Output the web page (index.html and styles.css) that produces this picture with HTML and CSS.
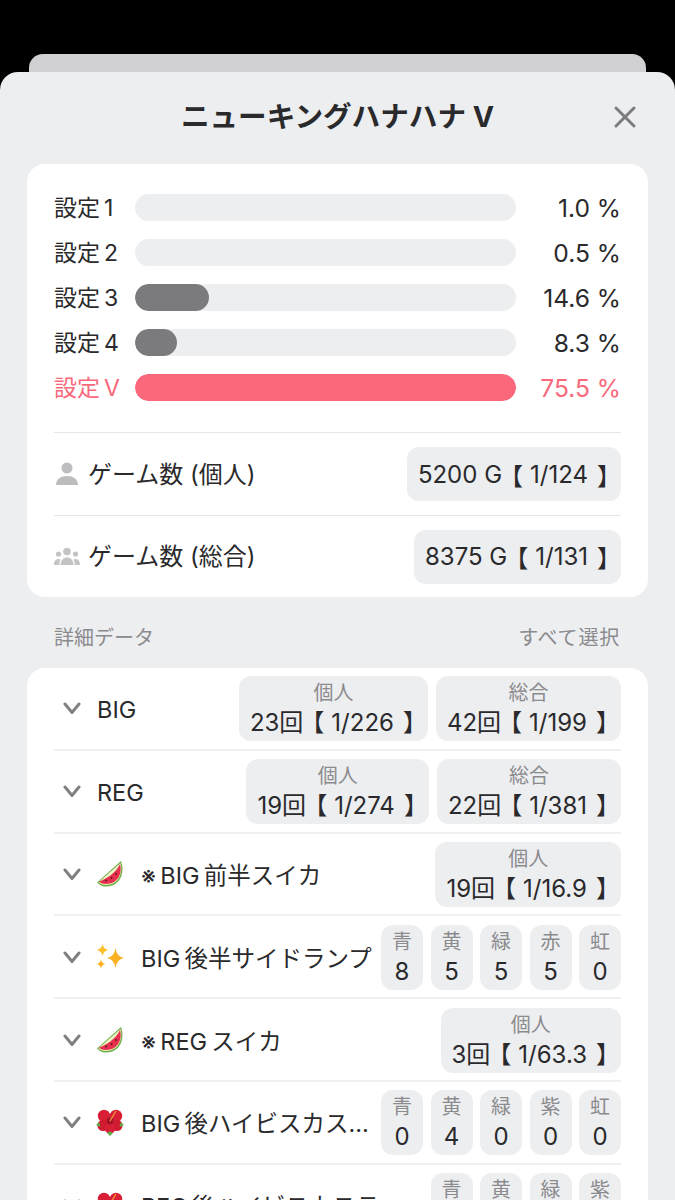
FILE: index.html

```html
<!DOCTYPE html>
<html lang="ja">
<head>
    <meta charset="UTF-8">
    <meta name="viewport" content="width=device-width, initial-scale=1.0">
    <title>ニューキングハナハナ V</title>
    <link rel="stylesheet" href="styles.css">
</head>
<body>
    <svg class="defs" width="0" height="0">
        <symbol id="chevron" viewBox="0 0 18 13"><path d="M2 2l7 8.500L16 2" fill="none" stroke="#808082" stroke-width="3" stroke-linecap="round" stroke-linejoin="round"/></symbol>
        <symbol id="melon" viewBox="0 0 28 28">
            <path d="M25 1C29 12 25 26.500 9 26.500 6 26.500 3 24.800 1 22.500z" fill="#6fae45"/>
            <path d="M24.500 3C27 13 23 25 9.300 25 6.800 25 4.500 24 2.500 22.300z" fill="#eef3c8"/>
            <path d="M24 4C26.500 13 22.500 24 9.500 24 7 24 5 23.300 3 21.500 10 19 20 13 24 4z" fill="#e8304e"/>
            <circle cx="20" cy="14" r="1" fill="#5a1a20"/><circle cx="15.500" cy="18" r="1" fill="#5a1a20"/><circle cx="10" cy="20.500" r="1" fill="#5a1a20"/>
        </symbol>
        <symbol id="sparkles" viewBox="0 0 28 28">
            <path d="M19.500 5Q20.500 13.500 28 15 20.500 16.500 19.500 25 18.500 16.500 11 15 18.500 13.500 19.500 5z" fill="#fbb124"/>
            <path d="M6.500 1Q7.300 6.200 12.500 7 7.300 7.800 6.500 13 5.700 7.800 .5 7 5.700 6.200 6.500 1z" fill="#fcc02c"/>
            <path d="M5 16.500Q5.700 20.300 9.500 21 5.700 21.700 5 25.500 4.300 21.700 .5 21 4.300 20.300 5 16.500z" fill="#fbb124"/>
        </symbol>
        <symbol id="hibiscus" viewBox="0 0 28 28">
            <circle cx="8" cy="7" r="6.200" fill="#d91f35"/><circle cx="20" cy="7" r="6.200" fill="#d91f35"/>
            <circle cx="21" cy="16.500" r="5.500" fill="#cf1b30"/><circle cx="7" cy="16.500" r="5.500" fill="#cf1b30"/><circle cx="14" cy="19" r="5.500" fill="#d91f35"/>
            <circle cx="14" cy="12" r="3.500" fill="#a5122a"/>
            <path d="M14 12l6-10" stroke="#f4a23a" stroke-width="1.200" fill="none"/>
            <path d="M0 16l3-3 1.500 5zM28 16l-3-3-1.500 5zM14 27l-3-3 3-1.500 3 1.500z" fill="#5dae4a"/>
        </symbol>
    </svg>

    <div class="sheet-back"></div>
    <div class="sheet">
        <div class="sheet-head">
            <h2>ニューキングハナハナ V</h2>
            <svg class="close" viewBox="0 0 24 24"><path d="M3 3l18 18M21 3L3 21" fill="none" stroke="#7c7c7e" stroke-width="3" stroke-linecap="round"/></svg>
        </div>

        <div class="card summary">
            <div class="rates">
                <div class="rate"><span class="rate-name">設定<i>1</i></span><div class="bar"></div><span class="rate-val">1.0 %</span></div>
                <div class="rate"><span class="rate-name">設定<i>2</i></span><div class="bar"></div><span class="rate-val">0.5 %</span></div>
                <div class="rate"><span class="rate-name">設定<i>3</i></span><div class="bar"><div class="fill" style="width: 19.4%"></div></div><span class="rate-val">14.6 %</span></div>
                <div class="rate"><span class="rate-name">設定<i>4</i></span><div class="bar"><div class="fill" style="width: 11%"></div></div><span class="rate-val">8.3 %</span></div>
                <div class="rate top"><span class="rate-name">設定<i>V</i></span><div class="bar"><div class="fill" style="width: 100%"></div></div><span class="rate-val">75.5 %</span></div>
            </div>
            <div class="game-row">
                <svg class="game-icon" viewBox="0 0 26 26"><circle cx="13" cy="7" r="5.500" fill="#bdbdbf"/><path d="M2 24c0-6 5-9 11-9s11 3 11 9z" fill="#bdbdbf"/></svg>
                <span class="game-name">ゲーム数 (個人)</span>
                <span class="pill">5200 G<b class="open">【</b>1/124<b class="shut">】</b></span>
            </div>
            <div class="game-row">
                <svg class="game-icon" viewBox="0 0 26 26"><circle cx="13" cy="7.500" r="3.800" fill="#c4c4c6"/><circle cx="4.500" cy="10" r="2.600" fill="#c4c4c6"/><circle cx="21.500" cy="10" r="2.600" fill="#c4c4c6"/><path d="M6.500 21c0-5 3-7.500 6.500-7.500s6.500 2.500 6.500 7.500z" fill="#c4c4c6"/><path d="M0 21c0-4 2-6 4.500-6 .8 0 1.500.2 2 .5-.7 1.500-1.200 3.200-1.200 5.500zM26 21c0-4-2-6-4.500-6-.8 0-1.500.2-2 .5.700 1.500 1.200 3.200 1.200 5.500z" fill="#c4c4c6"/></svg>
                <span class="game-name">ゲーム数 (総合)</span>
                <span class="pill">8375 G<b class="open">【</b>1/131<b class="shut">】</b></span>
            </div>
        </div>

        <div class="section-head"><span>詳細データ</span><span>すべて選択</span></div>

        <div class="card detail">
            <div class="row">
                <svg class="chevron"><use href="#chevron"/></svg>
                <span class="row-name">BIG</span>
                <div class="stat"><small>個人</small>23回<b class="open">【</b>1/226<b class="shut">】</b></div>
                <div class="stat"><small>総合</small>42回<b class="open">【</b>1/199<b class="shut">】</b></div>
            </div>
            <div class="row">
                <svg class="chevron"><use href="#chevron"/></svg>
                <span class="row-name">REG</span>
                <div class="stat"><small>個人</small>19回<b class="open">【</b>1/274<b class="shut">】</b></div>
                <div class="stat"><small>総合</small>22回<b class="open">【</b>1/381<b class="shut">】</b></div>
            </div>
            <div class="row">
                <svg class="chevron"><use href="#chevron"/></svg>
                <svg class="emoji"><use href="#melon"/></svg>
                <span class="row-name">※&thinsp;BIG&thinsp;前半スイカ</span>
                <div class="stat"><small>個人</small>19回<b class="open">【</b>1/16.9<b class="shut">】</b></div>
            </div>
            <div class="row">
                <svg class="chevron"><use href="#chevron"/></svg>
                <svg class="emoji"><use href="#sparkles"/></svg>
                <span class="row-name">BIG&thinsp;後半サイドランプ</span>
                <div class="tiles">
                    <div class="tile"><small>青</small>8</div>
                    <div class="tile"><small>黄</small>5</div>
                    <div class="tile"><small>緑</small>5</div>
                    <div class="tile"><small>赤</small>5</div>
                    <div class="tile"><small>虹</small>0</div>
                </div>
            </div>
            <div class="row">
                <svg class="chevron"><use href="#chevron"/></svg>
                <svg class="emoji"><use href="#melon"/></svg>
                <span class="row-name">※&thinsp;REG&thinsp;スイカ</span>
                <div class="stat"><small>個人</small>3回<b class="open">【</b>1/63.3<b class="shut">】</b></div>
            </div>
            <div class="row">
                <svg class="chevron"><use href="#chevron"/></svg>
                <svg class="emoji"><use href="#hibiscus"/></svg>
                <span class="row-name">BIG&thinsp;後ハイビスカス…</span>
                <div class="tiles">
                    <div class="tile"><small>青</small>0</div>
                    <div class="tile"><small>黄</small>4</div>
                    <div class="tile"><small>緑</small>0</div>
                    <div class="tile"><small>紫</small>0</div>
                    <div class="tile"><small>虹</small>0</div>
                </div>
            </div>
            <div class="row">
                <svg class="chevron"><use href="#chevron"/></svg>
                <svg class="emoji"><use href="#hibiscus"/></svg>
                <span class="row-name">REG&thinsp;後ハイビスカステ…</span>
                <div class="tiles">
                    <div class="tile"><small>青</small>0</div>
                    <div class="tile"><small>黄</small>0</div>
                    <div class="tile"><small>緑</small>0</div>
                    <div class="tile"><small>紫</small>0</div>
                </div>
            </div>
        </div>
    </div>
</body>
</html>
```

FILE: styles.css

```css
html, body {
    margin: 0;
    padding: 0;
    height: 1200px;
    overflow: hidden;
    background: #000;
}
body {
    padding-top: 54px;
    box-sizing: border-box;
    font-family: Inter, "Noto Sans CJK JP", sans-serif;
    color: #2a2a2c;
}
.defs {
    display: block;
    height: 0;
}
.sheet-back {
    height: 18px;
    margin: 0 29px;
    background: #d1d1d3;
    border-radius: 14px 14px 0 0;
}
.sheet {
    height: 1128px;
    overflow: hidden;
    background: #edeef0;
    border-radius: 18px 18px 0 0;
    padding: 0 27px;
    box-sizing: border-box;
}
.sheet-head {
    height: 92px;
    display: flex;
    align-items: center;
    justify-content: center;
    position: relative;
}
.sheet-head h2 {
    margin: 0 0 3px;
    font-size: 28.600px;
    line-height: 40px;
    font-weight: 700;
    color: #2a2a2c;
}
.close {
    position: absolute;
    right: 11px;
    top: 33px;
    width: 24px;
    height: 24px;
}
.card {
    background: #fff;
    border-radius: 18px;
    padding: 0 27px;
}
.summary {
    padding-top: 30px;
}
.rates {
    display: flex;
    flex-direction: column;
    gap: 18px;
    padding-bottom: 31px;
}
.rate {
    display: flex;
    align-items: center;
    height: 27px;
    font-size: 24.600px;
}
.rate-name {
    width: 81px;
    font-size: 23px;
    line-height: 30px;
    white-space: nowrap;
}
.rate-name i {
    font-style: normal;
    margin-left: 4px;
}
.bar {
    width: 381px;
    height: 27px;
    background: #edeef0;
    border-radius: 14px;
    overflow: hidden;
}
.fill {
    height: 100%;
    background: #7b7b7d;
    border-radius: 14px;
}
.rate-val {
    flex: 1;
    padding-top: 1px;
    text-align: right;
}
.rate.top {
    color: #f9697c;
}
.rate.top .fill {
    background: #fb687b;
}
.game-row {
    display: flex;
    align-items: center;
    height: 82.500px;
    padding-top: 1px;
    border-top: 1px solid #e6e6e8;
    box-sizing: border-box;
    font-size: 24px;
}
.game-icon {
    width: 26px;
    height: 26px;
    margin-right: 8px;
}
.game-name {
    flex: 1;
    line-height: 30px;
    padding-top: 1px;
}
.pill {
    height: 54px;
    display: flex;
    align-items: center;
    padding: 0 10px 0 11px;
    background: #edeef0;
    border-radius: 12px;
    white-space: nowrap;
}
b {
    font-weight: 400;
}
/* half-width brackets, spaced by hand */
.open, .shut {
    font-feature-settings: "halt";
}
.open {
    margin: 0 7px 0 9px;
}
.shut {
    margin: 0 2px 0 9px;
}
.section-head {
    height: 71px;
    padding: 10px 28px 0 27px;
    box-sizing: border-box;
    display: flex;
    align-items: center;
    justify-content: space-between;
    font-size: 20px;
    line-height: 30px;
    color: #8b8b8e;
}
.section-head span:last-child {
    letter-spacing: .8px;
}
.row {
    display: flex;
    align-items: center;
    height: 82.800px;
    gap: 8px;
    padding-top: 1px;
    border-bottom: 2px solid #f0f0f2;
    box-sizing: border-box;
    font-size: 24px;
}
.chevron {
    width: 18px;
    height: 13px;
    margin: 0 8px 0 9px;
    flex: none;
}
.emoji {
    width: 28px;
    height: 28px;
    margin: 0 9px 0 -1px;
    flex: none;
}
.row-name {
    flex: 1;
    min-width: 0;
    font-size: 23.500px;
    line-height: 32px;
    padding-top: 3px;
    white-space: nowrap;
}
.stat, .tile {
    height: 65px;
    box-sizing: border-box;
    background: #edeef0;
    border-radius: 12px;
    text-align: center;
    line-height: 30px;
    white-space: nowrap;
    flex: none;
}
.stat {
    padding: 3px 11px 0 11px;
}
.stat small, .tile small {
    display: block;
    font-size: 20px;
    line-height: 29px;
    color: #8b8b8e;
}
.tiles {
    display: flex;
    gap: 7.500px;
    flex: none;
}
.tile {
    width: 42px;
    padding-top: 3px;
}
```
